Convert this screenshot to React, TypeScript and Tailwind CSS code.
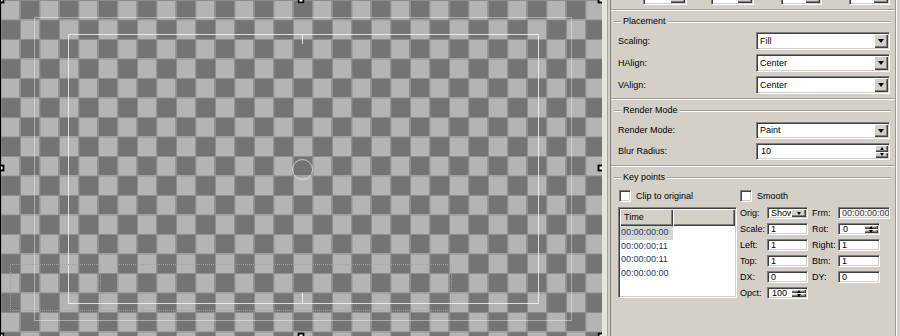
import React from "react";

const sunken =
  "border border-t-[#808080] border-l-[#808080] border-b-white border-r-white shadow-[inset_1px_1px_0_#404040,inset_-1px_-1px_0_#d4d0c8]";
const raised =
  "bg-[#d4d0c8] shadow-[inset_1px_1px_0_#ffffff,inset_-1px_-1px_0_#404040,inset_-2px_-2px_0_#808080]";
const etched = "h-px bg-[#a09d96] shadow-[0_1px_0_#ffffff]";

const DownArrow = ({ sm = false }: { sm?: boolean }) => (
  <span
    className={
      sm
        ? "h-0 w-0 border-x-[2.5px] border-t-[3px] border-x-transparent border-t-black"
        : "h-0 w-0 border-x-[3.5px] border-t-[4px] border-x-transparent border-t-black"
    }
  />
);

const UpArrow = () => (
  <span className="h-0 w-0 border-x-[2.5px] border-b-[3px] border-x-transparent border-b-black" />
);

function Combo({
  value,
  className = "",
  btn = "w-[14px]",
  sm = false,
}: {
  value: string;
  className?: string;
  btn?: string;
  sm?: boolean;
}) {
  return (
    <div className={`flex items-stretch bg-white p-px ${sunken} ${className}`}>
      <span className="flex flex-1 items-center overflow-hidden whitespace-nowrap pl-[2px] leading-none">
        {value}
      </span>
      <span className={`flex items-center justify-center ${btn} ${raised}`}>
        <DownArrow sm={sm} />
      </span>
    </div>
  );
}

function Spin({
  value,
  className = "",
  btn = "w-[13px]",
}: {
  value: string;
  className?: string;
  btn?: string;
}) {
  return (
    <div className={`flex items-stretch bg-white p-px ${sunken} ${className}`}>
      <span className="flex flex-1 items-center pl-[3px] leading-none">{value}</span>
      <span className={`flex flex-col ${btn}`}>
        <span className={`flex flex-1 items-center justify-center ${raised}`}>
          <UpArrow />
        </span>
        <span className={`flex flex-1 items-center justify-center ${raised}`}>
          <DownArrow sm />
        </span>
      </span>
    </div>
  );
}

function Field({ value, className = "" }: { value: string; className?: string }) {
  return (
    <div className={`flex items-center overflow-hidden whitespace-nowrap pl-[3px] leading-none ${sunken} ${className}`}>
      {value}
    </div>
  );
}

function GroupTitle({ title }: { title: string }) {
  return (
    <div className="ml-[3px] mr-[4px] flex h-[11px] items-center">
      <div className={`w-[7px] ${etched}`} />
      <span className="px-[2px] leading-none">{title}</span>
      <div className={`flex-1 ${etched}`} />
    </div>
  );
}

function Row({ label, children, h }: { label: string; children: React.ReactNode; h: string }) {
  return (
    <div className={`flex items-center pl-[7px] ${h}`}>
      <span className="w-[138px] leading-none">{label}</span>
      {children}
    </div>
  );
}

const handles: [number, number][] = [
  [0, 0],
  [300, 0],
  [600, 0],
  [0, 168],
  [600, 168],
  [0, 336],
  [300, 336],
  [600, 336],
];

const keyTimes = ["00:00:00:00", "00:00:00:11", "00:00:00:11", "00:00:00:00"];

function Canvas() {
  return (
    <div className="relative h-[336px] w-[602px] shrink-0 overflow-hidden border-l border-l-black bg-[image:linear-gradient(90deg,#8e8e8e_1px,transparent_1px),linear-gradient(#8e8e8e_1px,transparent_1px),repeating-conic-gradient(#747474_0_25%,#b4b4b4_0_50%)] bg-[length:19.5px_19.5px,19.5px_19.5px,39px_39px] bg-[position:-0.5px_0]">
      {/* safe areas */}
      <div className="absolute left-[33px] top-[17px] h-[304px] w-[538px] border border-white/40" />
      <div className="absolute left-[67px] top-[34px] h-[270px] w-[471px] border border-white/75" />
      <div className="absolute left-[301px] top-[34px] h-[10px] w-px bg-white/75" />
      <div className="absolute left-[301px] top-[293px] h-[10px] w-px bg-white/75" />
      <div className="absolute left-[291px] top-[159px] size-[21px] rounded-full border border-white/60" />

      {/* dotted text boxes */}
      <div className="absolute left-[9px] top-[264px] h-[47px] w-[91px] border border-dotted border-[#a2a2a2]" />
      <div className="absolute left-[116px] top-[264px] h-[47px] w-[335px] border border-dotted border-[#a2a2a2]" />
      <div className="absolute left-[99px] top-[310px] h-px w-[18px] border-t border-dotted border-[#a2a2a2]" />

      {handles.map(([x, y], i) => (
        <div
          key={i}
          className="absolute size-[7px] -translate-x-1/2 -translate-y-1/2 border-2 border-black bg-white"
          style={{ left: x, top: y }}
        />
      ))}
    </div>
  );
}

function Panel() {
  return (
    <div className="flex h-[336px] flex-1 bg-[#d4d0c8] font-['Liberation_Sans',Arial,sans-serif] text-[9px] text-black">
      <div className="w-[5px] bg-[#e6e4df]" />
      <div className="w-px bg-[#a8a59e]" />
      <div className="w-[2px]" />
      <div className="w-px bg-[#85827c]" />

      <div className="flex w-[284px] flex-col">
        {/* bottom of the previous group */}
        <div className="flex h-[9px] items-start overflow-hidden">
          {["ml-[32px] w-[44px]", "ml-[24px] w-[43px]", "ml-[27px] w-[41px]", "ml-[27px] w-[41px]"].map((c, i) => (
            <div key={i} className={`-mt-[12px] flex h-[17px] bg-white p-px ${sunken} ${c}`}>
              <span className="flex-1" />
              <span className={`w-[15px] ${raised}`} />
            </div>
          ))}
        </div>

        {/* Placement */}
        <div className="border-t border-t-[#a09d96] pb-[4px] pt-[6px] shadow-[inset_0_1px_0_#ffffff]">
          <GroupTitle title="Placement" />
          <div className="mt-[5px] flex flex-col gap-[4px]">
            <Row label="Scaling:" h="h-[18px]">
              <Combo value="Fill" className="h-[18px] w-[134px]" />
            </Row>
            <Row label="HAlign:" h="h-[18px]">
              <Combo value="Center" className="h-[18px] w-[134px]" />
            </Row>
            <Row label="VAlign:" h="h-[18px]">
              <Combo value="Center" className="h-[18px] w-[134px]" />
            </Row>
          </div>
        </div>

        {/* Render Mode */}
        <div className="border-t border-t-[#a09d96] pb-[5px] pt-[6px] shadow-[inset_0_1px_0_#ffffff]">
          <GroupTitle title="Render Mode" />
          <div className="mt-[6px] flex flex-col gap-[4px]">
            <Row label="Render Mode:" h="h-[17px]">
              <Combo value="Paint" className="h-[17px] w-[134px]" />
            </Row>
            <Row label="Blur Radius:" h="h-[17px]">
              <Spin value="10" className="h-[17px] w-[134px]" />
            </Row>
          </div>
        </div>

        {/* Key points */}
        <div className="flex-1 border-t border-t-[#a09d96] pt-[6px] shadow-[inset_0_1px_0_#ffffff]">
          <GroupTitle title="Key points" />
          <div className="mt-[7px] flex h-[12px] items-center">
            <div className="flex w-[129px] items-center pl-[8px]">
              <span className={`size-[12px] bg-white ${sunken}`} />
              <span className="ml-[5px] leading-none">Clip to original</span>
            </div>
            <div className="flex items-center">
              <span className={`size-[12px] bg-white ${sunken}`} />
              <span className="ml-[5px] leading-none">Smooth</span>
            </div>
          </div>

          <div className="mt-[5px] flex">
            <div className={`ml-[7px] flex h-[91px] w-[119px] flex-col bg-white p-px ${sunken}`}>
              <div className="flex h-[17px] shrink-0">
                <div className={`flex w-[53px] items-center pl-[4px] leading-none ${raised}`}>Time</div>
                <div className={`flex-1 ${raised}`} />
              </div>
              {keyTimes.map((t, i) => (
                <div
                  key={i}
                  className={`flex h-[13.5px] w-[53px] items-center pl-[1px] leading-none text-[#203c70] ${
                    i === 0 ? "bg-[#d8d6d0]" : ""
                  }`}
                >
                  {t}
                </div>
              ))}
            </div>

            <div className="ml-[3px] grid grid-cols-[27px_45px_26px_52px] grid-rows-[repeat(6,12px)] items-center gap-y-[4px] leading-none">
              <span>Orig:</span>
              <Combo value="Show" className="h-[12px] w-[41px]" btn="w-[15px]" sm />
              <span>Frm:</span>
              <Field value="00:00:00:00" className="h-[12px] w-[52px] bg-[#f4f4f2] text-[#404040]" />

              <span>Scale:</span>
              <Field value="1" className="h-[12px] w-[41px] bg-white" />
              <span>Rot:</span>
              <Spin value="0" className="h-[12px] w-[42px]" btn="w-[14px]" />

              <span>Left:</span>
              <Field value="1" className="h-[12px] w-[41px] bg-white" />
              <span>Right:</span>
              <Field value="1" className="h-[12px] w-[42px] bg-white" />

              <span>Top:</span>
              <Field value="1" className="h-[12px] w-[41px] bg-white" />
              <span>Btm:</span>
              <Field value="1" className="h-[12px] w-[42px] bg-white" />

              <span>DX:</span>
              <Field value="0" className="h-[12px] w-[41px] bg-white" />
              <span>DY:</span>
              <Field value="0" className="h-[12px] w-[42px] bg-white" />

              <span>Opct:</span>
              <Spin value="100" className="h-[12px] w-[41px]" btn="w-[15px]" />
              <span />
              <span />
            </div>
          </div>
        </div>
      </div>

      <div className="w-px bg-[#9c9992]" />
      <div className="w-px bg-white" />
      <div className="flex-1" />
    </div>
  );
}

export default function App() {
  return (
    <div className="flex h-[336px] w-[900px] overflow-hidden bg-[#d4d0c8]">
      <Canvas />
      <Panel />
    </div>
  );
}
